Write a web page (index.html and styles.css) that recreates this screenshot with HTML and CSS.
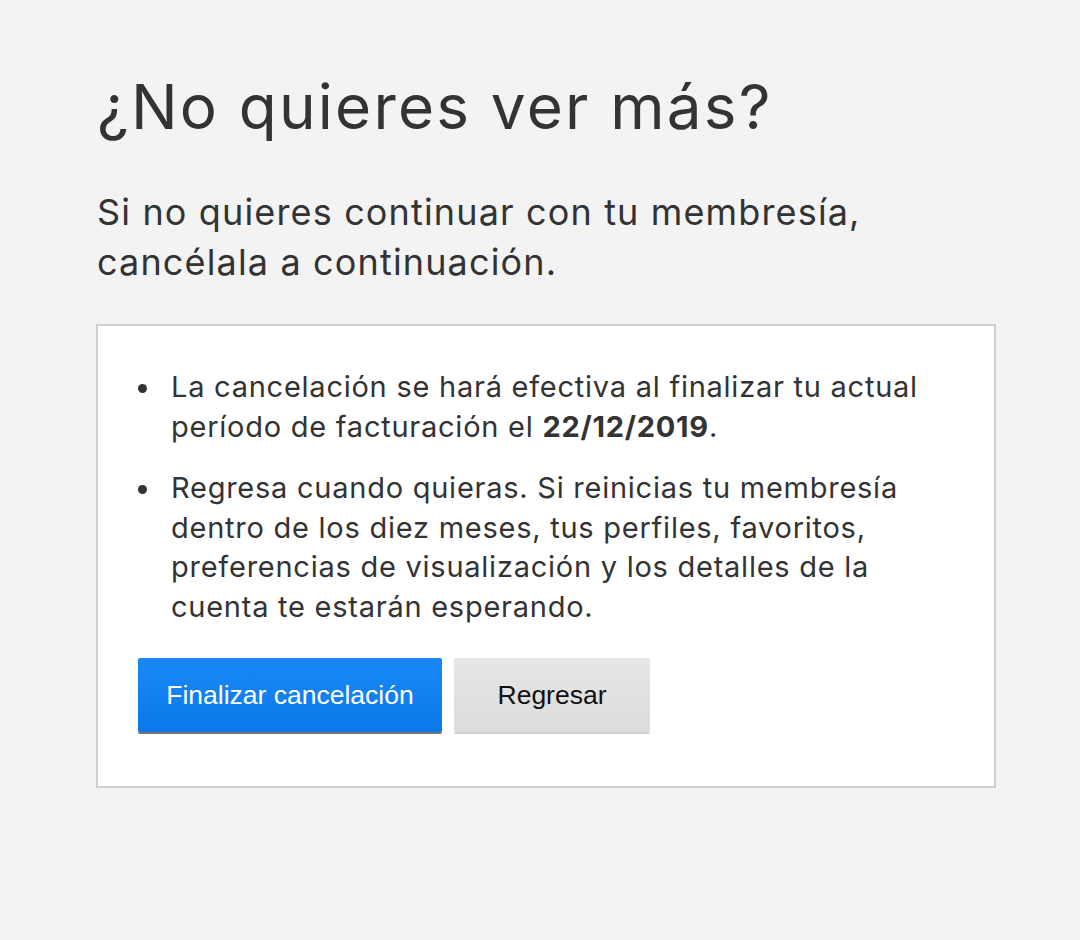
FILE: index.html
```html
<!DOCTYPE html>
<html lang="es">
<head>
    <meta charset="UTF-8">
    <meta name="viewport" content="width=device-width, initial-scale=1.0">
    <title>Cancelar membresía</title>
    <link rel="stylesheet" href="styles.css">
</head>
<body>
    <div class="page">
        <h1 class="title">¿No quieres ver más?</h1>
        <p class="lead">Si no quieres continuar con tu membresía, cancélala a continuación.</p>

        <!-- Cancel box -->
        <div class="cancel-box">
            <ul class="notes">
                <li>La cancelación se hará efectiva al finalizar tu actual período de facturación el <strong>22/12/2019</strong>.</li>
                <li>Regresa cuando quieras. Si reinicias tu membresía dentro de los diez meses, tus perfiles, favoritos, preferencias de visualización y los detalles de la cuenta te estarán esperando.</li>
            </ul>
            <div class="actions">
                <button class="btn btn-primary">Finalizar cancelación</button>
                <button class="btn btn-secondary">Regresar</button>
            </div>
        </div>
    </div>
</body>
</html>
```

FILE: styles.css
```css
* {
    margin: 0;
    padding: 0;
    box-sizing: border-box;
}

body {
    background: #f3f3f3;
    color: #333;
    font-family: Inter, Roboto, 'Liberation Sans', Arial, sans-serif;
}

.page {
    width: 900px;
    margin-left: 96px;
    padding-top: 67px;
}

.title {
    font-size: 62px;
    font-weight: 400;
    line-height: 80px;
    margin-left: 1px;
    letter-spacing: 2.2px;
}

.lead {
    font-size: 36px;
    line-height: 50px;
    margin-top: 40px;
    margin-left: 1px;
    max-width: 800px;
    letter-spacing: 1.15px;
}

/* Cancel box */
.cancel-box {
    margin-top: 37px;
    background: #fff;
    border: 2px solid #cfcfcf;
    padding: 41px 40px 54px 40px;
}

.notes {
    list-style: none;
    padding-left: 33px;
    font-size: 29px;
    line-height: 39.5px;
    letter-spacing: 0.75px;
}

.notes li {
    position: relative;
    margin-bottom: 22px;
    max-width: 765px;
}

.notes li:last-child {
    margin-bottom: 0;
}

.notes li::before {
    content: "";
    position: absolute;
    left: -33px;
    top: 17px;
    width: 9px;
    height: 9px;
    border-radius: 50%;
    background: #333;
}

.notes strong {
    font-weight: 700;
}

.actions {
    display: flex;
    gap: 12px;
    margin-top: 32px;
}

.btn {
    font-family: 'Liberation Sans', Arial, sans-serif;
    font-size: 26.5px;
    border: none;
    border-radius: 2px;
    height: 74px;
    cursor: pointer;
}

.btn-primary {
    width: 304px;
    color: #fff;
    background: linear-gradient(to bottom, #1a88f6, #0a78ea);
    box-shadow: 0 2px 0 rgba(0, 0, 0, 0.55);
}

.btn-secondary {
    width: 196px;
    color: #111;
    background: linear-gradient(to bottom, #e6e6e6, #dcdcdc);
    box-shadow: 0 2px 0 rgba(0, 0, 0, 0.18);
}
```
